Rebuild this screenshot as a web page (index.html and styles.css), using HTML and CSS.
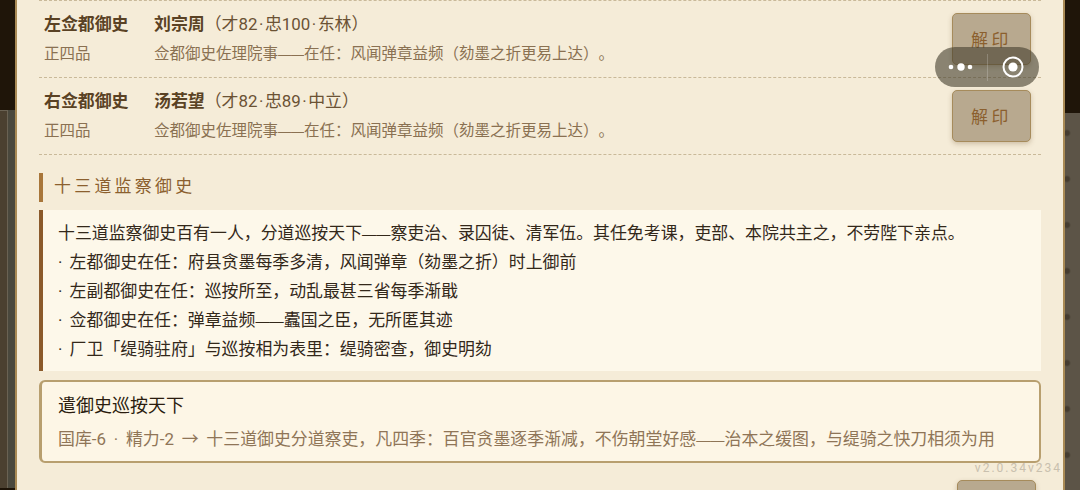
FILE: index.html
```html
<!DOCTYPE html>
<html lang="zh-CN">
<head>
    <meta charset="UTF-8">
    <title>都察院</title>
    <link rel="stylesheet" href="styles.css">
</head>
<body>
    <div class="backdrop backdrop-left"><div class="backdrop-top"></div><div class="backdrop-panel"></div></div>

    <div class="modal">
        <div class="office-row">
            <div class="office-rank">
                <div class="office-title">左佥都御史</div>
                <div class="office-grade">正四品</div>
            </div>
            <div class="office-info">
                <div class="office-name"><b>刘宗周</b>（才82<span class="sep">·</span>忠100<span class="sep">·</span>东林）</div>
                <div class="office-desc">佥都御史佐理院事<span class="dash">——</span>在任：风闻弹章益频（劾墨之折更易上达）。</div>
            </div>
            <button class="seal-btn">解印</button>
        </div>
        <div class="office-row">
            <div class="office-rank">
                <div class="office-title">右佥都御史</div>
                <div class="office-grade">正四品</div>
            </div>
            <div class="office-info">
                <div class="office-name"><b>汤若望</b>（才82<span class="sep">·</span>忠89<span class="sep">·</span>中立）</div>
                <div class="office-desc">佥都御史佐理院事<span class="dash">——</span>在任：风闻弹章益频（劾墨之折更易上达）。</div>
            </div>
            <button class="seal-btn">解印</button>
        </div>

        <div class="section-title">十三道监察御史</div>

        <div class="info-box">
            <div>十三道监察御史百有一人，分道巡按天下<span class="dash">——</span>察吏治、录囚徒、清军伍。其任免考课，吏部、本院共主之，不劳陛下亲点。</div>
            <div>· 左都御史在任：府县贪墨每季多清，风闻弹章（劾墨之折）时上御前</div>
            <div>· 左副都御史在任：巡按所至，动乱最甚三省每季渐戢</div>
            <div>· 佥都御史在任：弹章益频<span class="dash">——</span>蠹国之臣，无所匿其迹</div>
            <div>· 厂卫「缇骑驻府」与巡按相为表里：缇骑密查，御史明劾</div>
        </div>

        <div class="action-card">
            <div class="action-title">遣御史巡按天下</div>
            <div class="action-desc">国库-6 · 精力-2 → 十三道御史分道察吏，凡四季：百官贪墨逐季渐减，不伤朝堂好感<span class="dash">——</span>治本之缓图，与缇骑之快刀相须为用</div>
        </div>

        <div class="modal-footer"><button class="seal-btn footer-btn"></button></div>
        <div class="version">v2.0.34v234</div>
    </div>

    <div class="backdrop backdrop-right"><div class="backdrop-top"></div><div class="backdrop-panel"></div></div>

    <div class="capsule">
        <svg class="capsule-dots" width="30" height="10" viewBox="0 0 30 10">
            <circle cx="4" cy="5" r="2.3" fill="#fff"/>
            <circle cx="14" cy="5" r="3.7" fill="#fff"/>
            <circle cx="23" cy="5" r="2.3" fill="#fff"/>
        </svg>
        <span class="capsule-divider"></span>
        <svg class="capsule-target" width="22" height="22" viewBox="0 0 22 22">
            <circle cx="11" cy="11" r="9.5" fill="none" stroke="#fff" stroke-width="2"/>
            <circle cx="11" cy="11" r="4.6" fill="#fff"/>
        </svg>
    </div>
</body>
</html>
```

FILE: styles.css
```css
html, body {
    height: 490px;
}

body {
    margin: 0;
    display: flex;
    overflow: hidden;
    background-color: #1e1408;
    font-family: Roboto, "Noto Sans CJK SC", sans-serif;
    text-spacing-trim: space-all;
}

/* em dash drawn solid and a bit shorter than two full-width chars */
.dash {
    font-family: "Liberation Sans", sans-serif;
    font-size: 0.84em;
    line-height: 0;
}

.sep {
    padding: 0 1.5px;
}

/* page behind the modal */
.backdrop {
    width: 15px;
    flex-shrink: 0;
    display: flex;
    flex-direction: column;
}

.backdrop-top {
    height: 110px;
    background-color: #1f1509;
    flex-shrink: 0;
}

.backdrop-panel {
    flex: 1;
}

.backdrop-left .backdrop-panel {
    margin-bottom: 2px;
    background-color: #4b4030;
    border-right: 7px solid #4a483d;
    box-shadow: inset -1px 1px 0 #6a6253;
}

.backdrop-right .backdrop-top {
    height: 113px;
}

.backdrop-right .backdrop-panel {
    background-color: #5c5447;
    background-image: radial-gradient(circle at 2px 20px, #453c30 2px, transparent 4px);
    background-size: 15px 46px;
}

/* modal */
.modal {
    flex: 1;
    min-width: 0;
    position: relative;
    box-sizing: border-box;
    height: 490px;
    overflow: hidden;
    padding: 0 22px;
    background-color: #f5ecd8;
    border-left: 2px solid #a98a55;
    border-right: 2px solid #a98a55;
}

.office-row {
    display: flex;
    align-items: center;
    height: 77px;
    box-sizing: border-box;
    padding: 0 10px 0 5px;
    border-top: 1px dashed #c9b999;
}

.office-row:nth-child(2) {
    border-bottom: 1px dashed #c9b999;
    height: 78px;
}

.office-rank {
    width: 110px;
    flex-shrink: 0;
}

.office-info {
    flex: 1;
}

.office-title,
.office-name {
    font-size: 16.9px;
    line-height: 30px;
    color: #6b5234;
}

.office-title {
    font-weight: 700;
    color: #5a4224;
}

.office-name b {
    color: #5a4224;
}

.office-grade,
.office-desc {
    font-size: 15.5px;
    line-height: 30px;
    color: #8a7152;
}

.seal-btn {
    width: 79px;
    height: 52px;
    padding: 0 0 2px;
    background-color: #b8a98f;
    border: 1px solid #a68b5b;
    border-radius: 5px;
    box-shadow: 0 2px 5px rgba(90, 60, 20, 0.25);
    font-family: inherit;
    font-size: 16.9px;
    letter-spacing: 3.5px;
    color: #8b5f2e;
}

.section-title {
    margin-top: 18px;
    height: 29px;
    line-height: 27px;
    padding-left: 11px;
    border-left: 4px solid #a8763a;
    font-size: 16.9px;
    letter-spacing: 3.3px;
    color: #8b5f2e;
}

.info-box {
    margin-top: 8px;
    padding: 9px 0 7px 15px;
    background-color: #fdf8ea;
    border-left: 4px solid #8b5a2b;
    font-size: 16.9px;
    word-spacing: 3px;
    line-height: 29px;
    white-space: nowrap;
    color: #33281a;
}

.action-card {
    margin-top: 9px;
    padding: 11px 16px 10px;
    background-color: #fdf6e6;
    border: 2px solid #b89f6f;
    border-left-width: 3px;
    border-radius: 6px;
    height: 83px;
    box-sizing: border-box;
}

.action-title {
    font-size: 18px;
    line-height: 26px;
    color: #2a1c0e;
}

.action-desc {
    margin-top: 8px;
    font-size: 16.9px;
    word-spacing: 3.6px;
    line-height: 24px;
    white-space: nowrap;
    color: #8f7557;
}

.modal-footer {
    display: flex;
    justify-content: flex-end;
    margin-top: 17px;
    margin-right: 5px;
}

.version {
    position: absolute;
    right: 1px;
    top: 460px;
    font-size: 12px;
    line-height: 16px;
    letter-spacing: 2px;
    color: #c9c0ae;
}

/* mini program capsule */
.capsule {
    position: absolute;
    left: 935px;
    top: 47px;
    width: 104px;
    height: 40px;
    box-sizing: border-box;
    display: flex;
    align-items: center;
    padding-left: 12px;
    border-radius: 20px;
    background-color: rgba(66, 61, 45, 0.6);
}

.capsule-divider {
    width: 1px;
    height: 27px;
    margin-left: 10px;
    background-color: rgba(255, 255, 255, 0.2);
}

.capsule-target {
    margin-left: 14px;
}
```
